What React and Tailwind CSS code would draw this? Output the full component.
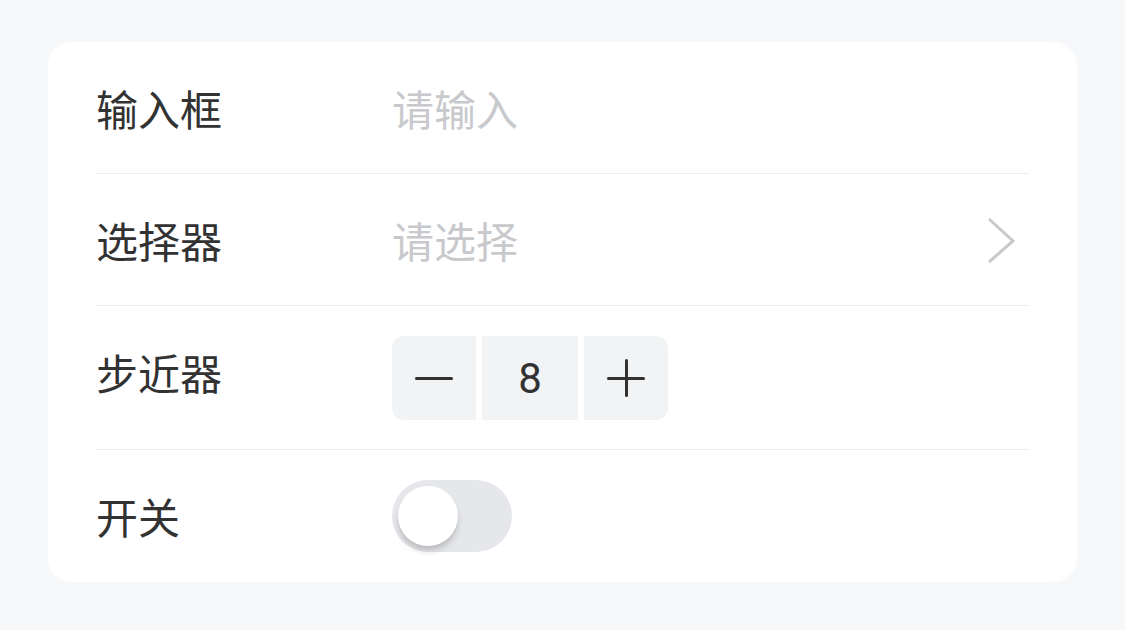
import { useState } from "react";

const font = { fontFamily: '"Noto Sans CJK SC", "Noto Sans", sans-serif' };

function Row({ label, tall, last, children }) {
  return (
    <div
      className={`flex items-start pt-[30px] ${tall ? "h-[144px]" : "h-[132px]"} ${
        last ? "" : "border-b border-[#ebedf0]"
      }`}
    >
      <div className="w-[296px] shrink-0 text-[42px] leading-[72px] text-[#323233]">{label}</div>
      <div className="flex min-h-[72px] flex-1 items-center">{children}</div>
    </div>
  );
}

export default function App() {
  const [value, setValue] = useState(8);
  const [on, setOn] = useState(false);

  return (
    <div className="min-h-[630px] w-full bg-[#f7f8fa] pt-[42px]" style={font}>
      <div className="mx-[48px] rounded-[24px] bg-white px-[48px]">
        <Row label="输入框">
          <input
            placeholder="请输入"
            className="w-full bg-transparent text-[42px] leading-[72px] text-[#323233] outline-none placeholder:text-[#c8c9cc]"
          />
        </Row>

        <Row label="选择器">
          <span className="flex-1 text-[42px] leading-[72px] text-[#c8c9cc]">请选择</span>
          <svg width="30" height="48" viewBox="0 0 30 48" className="mr-[12px]">
            <path d="M2 3 L26 25 L2 46" fill="none" stroke="#c8c9cc" strokeWidth="3" />
          </svg>
        </Row>

        <Row label="步近器" tall>
          <div className="flex gap-[6px]">
            <button
              onClick={() => setValue((v) => Math.max(1, v - 1))}
              className="flex h-[84px] w-[84px] items-center justify-center rounded-l-[12px] bg-[#f2f3f5]"
            >
              <span className="h-[3px] w-[38px] rounded-full bg-[#323233]" />
            </button>
            <div
              className="flex h-[84px] w-[96px] items-center justify-center bg-[#f2f3f5] text-[42px] text-[#323233]"
              style={{ fontFamily: 'Roboto, "Liberation Sans", sans-serif' }}
            >
              {value}
            </div>
            <button
              onClick={() => setValue((v) => v + 1)}
              className="relative flex h-[84px] w-[84px] items-center justify-center rounded-r-[12px] bg-[#f2f3f5]"
            >
              <span className="h-[3px] w-[38px] rounded-full bg-[#323233]" />
              <span className="absolute h-[38px] w-[3px] rounded-full bg-[#323233]" />
            </button>
          </div>
        </Row>

        <Row label="开关" last>
          <button
            onClick={() => setOn((o) => !o)}
            className={`flex h-[72px] w-[120px] items-center rounded-full p-[6px] ${
              on ? "justify-end bg-[#1989fa]" : "justify-start bg-[#e6e7ea]"
            }`}
          >
            <span className="h-[60px] w-[60px] rounded-full bg-white shadow-[0_6px_6px_rgba(0,0,0,0.12),0_3px_3px_rgba(0,0,0,0.06)]" />
          </button>
        </Row>
      </div>
    </div>
  );
}
